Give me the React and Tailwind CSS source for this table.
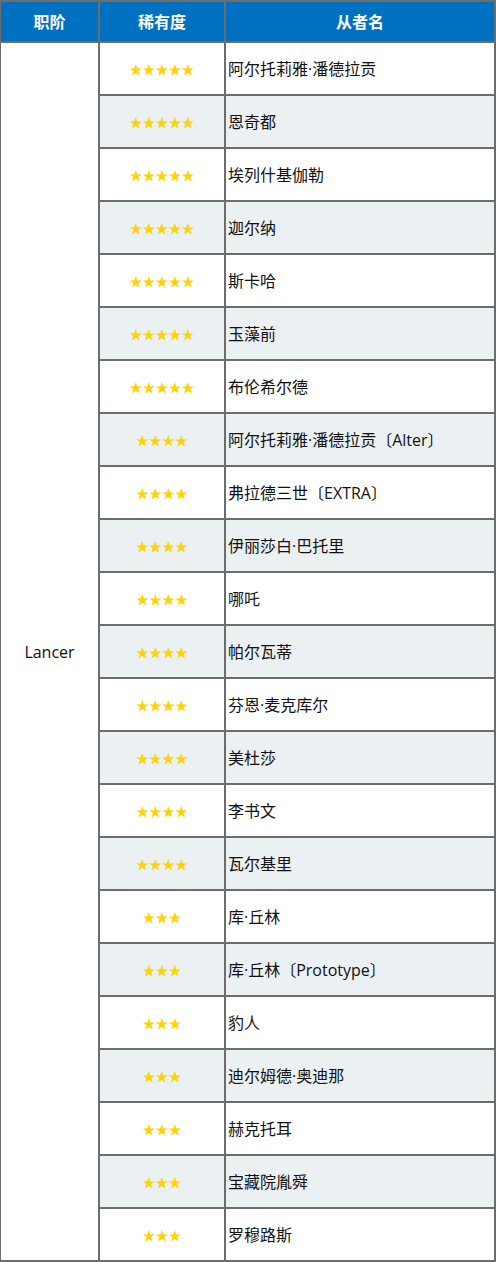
import React from "react";

const rows = [
  [5, "阿尔托莉雅·潘德拉贡"],
  [5, "恩奇都"],
  [5, "埃列什基伽勒"],
  [5, "迦尔纳"],
  [5, "斯卡哈"],
  [5, "玉藻前"],
  [5, "布伦希尔德"],
  [4, "阿尔托莉雅·潘德拉贡〔Alter〕"],
  [4, "弗拉德三世〔EXTRA〕"],
  [4, "伊丽莎白·巴托里"],
  [4, "哪吒"],
  [4, "帕尔瓦蒂"],
  [4, "芬恩·麦克库尔"],
  [4, "美杜莎"],
  [4, "李书文"],
  [4, "瓦尔基里"],
  [3, "库·丘林"],
  [3, "库·丘林〔Prototype〕"],
  [3, "豹人"],
  [3, "迪尔姆德·奥迪那"],
  [3, "赫克托耳"],
  [3, "宝藏院胤舜"],
  [3, "罗穆路斯"],
];

const starText = { 5: "★★★★★", 4: "★★★★", 3: "★★★" };

export default function App() {
  return (
    <div className="w-[496px] bg-[#6d6d6d] pt-[2px] pl-[1px] pr-[2px] pb-[2px] font-['Open_Sans','Noto_Sans_CJK_SC',sans-serif] text-[16px] text-[#111]">
      <div className="grid grid-cols-[97px_124px_268px] grid-rows-[39px_repeat(23,51px)] gap-[2px]">
        <div className="bg-[#0070c0] text-white font-bold flex items-center justify-center">职阶</div>
        <div className="bg-[#0070c0] text-white font-bold flex items-center justify-center">稀有度</div>
        <div className="bg-[#0070c0] text-white font-bold flex items-center justify-center">从者名</div>
        <div className="row-span-23 bg-white flex items-center justify-center">Lancer</div>
        {rows.map(([r, name], i) => {
          const bg = i % 2 === 1 ? "bg-[#ebf0f3]" : "bg-white";
          return (
            <React.Fragment key={i}>
              <div className={`${bg} flex items-center justify-center text-[#ffd200] text-[13px] font-['Noto_Sans_CJK_SC',sans-serif]`}>
                {starText[r]}
              </div>
              <div className={`${bg} flex items-center pl-[2px] whitespace-nowrap`}>{name}</div>
            </React.Fragment>
          );
        })}
      </div>
    </div>
  );
}
